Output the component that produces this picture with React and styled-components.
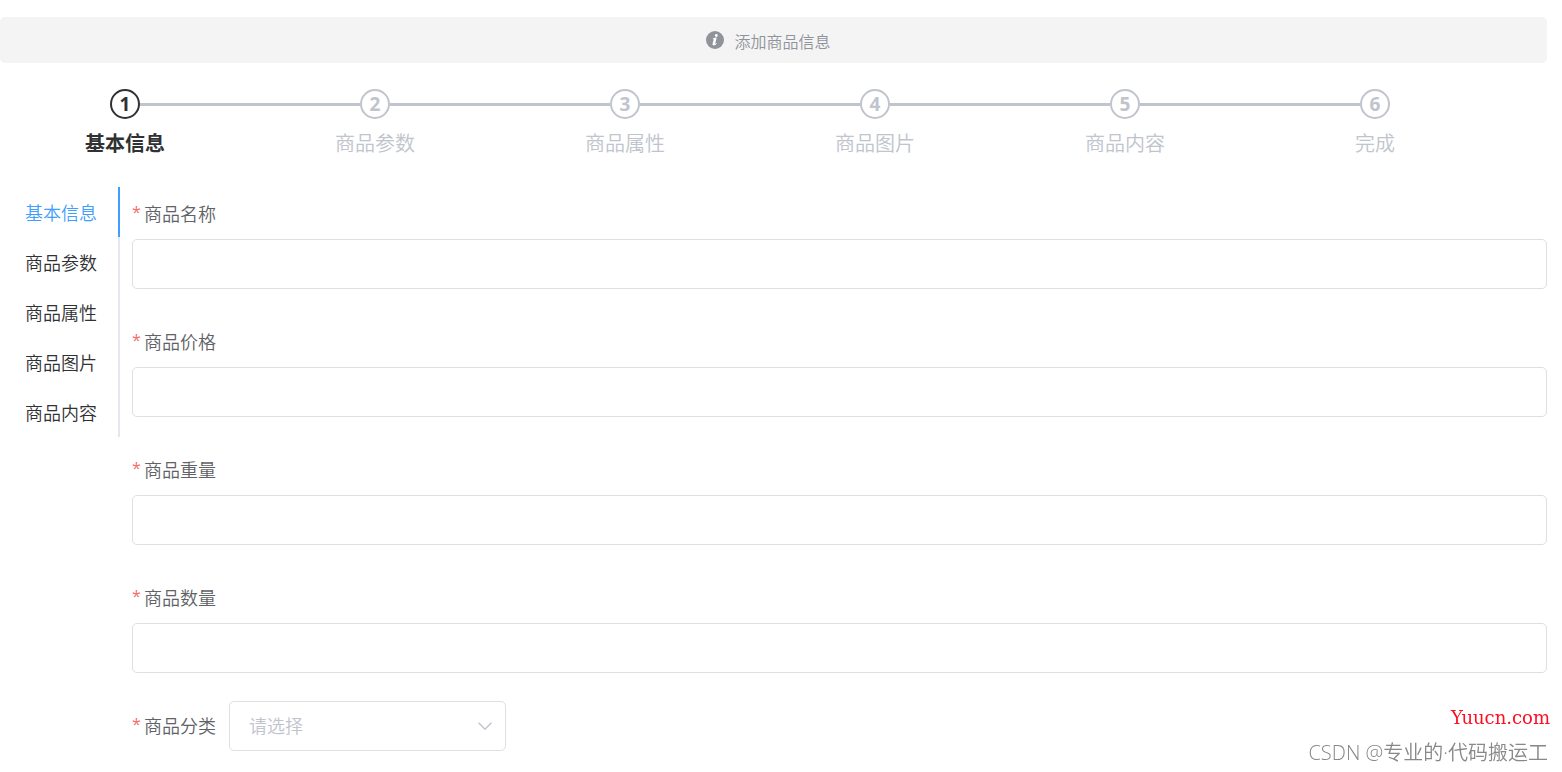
import * as React from 'react';
import { useState } from 'react';
import styled, { createGlobalStyle } from 'styled-components';

const GlobalStyle = createGlobalStyle`
  *, *::before, *::after {
    box-sizing: border-box;
  }

  body {
    margin: 0;
    background: #fff;
    color: #303133;
    font-family: 'Open Sans', 'Noto Sans CJK SC', sans-serif;
    font-size: 18px;
  }

  button, input, select {
    font: inherit;
  }
`;

const Page = styled.main`
  padding: 17px 15px 20px 0;
`;

const Alert = styled.div`
  display: flex;
  align-items: center;
  justify-content: center;
  gap: 10px;
  height: 46px;
  padding: 4px 10px 0 0;
  border-radius: 5px;
  background: #f4f4f5;
  color: #909399;
  font-size: 16px;
  font-weight: 350;
  line-height: 24px;
`;

const AlertIcon = styled.svg`
  width: 18px;
  height: 18px;
  margin-bottom: 5px;
`;

const Steps = styled.ol`
  display: flex;
  margin: 26px 47px 0 0;
  padding: 0;
  list-style: none;
`;

const Step = styled.li`
  flex: 1;
  color: ${({ $active }) => ($active ? '#303133' : '#c0c4cc')};
  font-weight: ${({ $active }) => ($active ? 700 : 350)};
  text-align: center;
`;

const StepHead = styled.div`
  display: flex;
  align-items: center;
`;

const StepLine = styled.span`
  flex: 1;
  height: 3px;
  background: ${({ $hidden }) => ($hidden ? 'transparent' : '#c0c4cc')};
`;

const StepNumber = styled.span`
  width: 30px;
  height: 30px;
  border: 2px solid currentColor;
  border-radius: 50%;
  font-size: 19px;
  font-weight: 700;
  line-height: 26px;
`;

const StepTitle = styled.div`
  margin-top: 9px;
  font-size: 20px;
  line-height: 32px;
`;

const Content = styled.div`
  display: flex;
  align-items: flex-start;
  gap: 12px;
  margin-top: 27px;
`;

const Tabs = styled.div`
  display: flex;
  flex: none;
  flex-direction: column;
`;

const Tab = styled.button`
  height: 50px;
  padding: 2px 21px 0 25px;
  border: 0;
  border-right: 2px solid ${({ $active }) => ($active ? '#409eff' : '#e4e7ed')};
  background: none;
  color: ${({ $active }) => ($active ? '#409eff' : '#303133')};
  font-weight: 350;
  line-height: 48px;
  cursor: pointer;
`;

const Form = styled.form`
  display: flex;
  flex: 1;
  flex-direction: column;
  gap: 28px;
  padding-top: 2px;
`;

const Field = styled.div`
  display: flex;
  flex-direction: ${({ $inline }) => ($inline ? 'row' : 'column')};
  gap: ${({ $inline }) => ($inline ? '13px' : '0')};
`;

const Label = styled.label`
  display: flex;
  height: 50px;
  color: #606266;
  font-weight: 350;
  line-height: 50px;

  &::before {
    content: '*';
    width: 12px;
    color: #f56c6c;
    font-size: 16px;
    font-weight: 400;
    line-height: 46px;
  }
`;

const Input = styled.input`
  width: 100%;
  height: 50px;
  padding: 0 19px;
  border: 1px solid #dcdfe6;
  border-radius: 5px;
  outline: none;
  background: #fff;
  color: #606266;

  &:focus {
    border-color: #409eff;
  }
`;

const SelectBox = styled.div`
  display: grid;
  width: 277px;
  align-items: center;

  > * {
    grid-area: 1 / 1;
  }
`;

const Select = styled.select`
  width: 100%;
  height: 50px;
  padding: 0 40px 0 19px;
  border: 1px solid #dcdfe6;
  border-radius: 5px;
  outline: none;
  appearance: none;
  background: #fff;
  color: ${({ value }) => (value ? '#606266' : '#c0c4cc')};
  font-weight: 350;
`;

const Arrow = styled.svg`
  justify-self: end;
  width: 14px;
  height: 8px;
  margin-right: 14px;
  pointer-events: none;
`;

const Watermark = styled.div`
  position: fixed;
  right: 12px;
  bottom: 3px;
  display: flex;
  flex-direction: column;
  align-items: flex-end;
  pointer-events: none;
`;

const SiteName = styled.span`
  color: #fe0e23;
  font-family: 'DejaVu Serif', serif;
  font-size: 18px;
  line-height: 38px;
`;

const Author = styled.span`
  margin-right: 2px;
  color: #888;
  font-size: 20px;
  font-weight: 350;
  line-height: 32px;
`;

const steps = ['基本信息', '商品参数', '商品属性', '商品图片', '商品内容', '完成'];

const fields = [
  { name: 'goods_name', label: '商品名称' },
  { name: 'goods_price', label: '商品价格' },
  { name: 'goods_weight', label: '商品重量' },
  { name: 'goods_number', label: '商品数量' },
];

const App = () => {
  const [active, setActive] = useState(0);
  const [category, setCategory] = useState('');

  return (
    <>
      <GlobalStyle />
      <Page>
        <Alert role="status">
          <AlertIcon viewBox="0 0 18 18" aria-hidden="true">
            <circle cx="9" cy="9" r="9" fill="#909399" />
            <circle cx="10.3" cy="4.5" r="1.4" fill="#fff" />
            <path
              d="M6.9 7.5c1.1-.5 2.3-.8 3.8-.9L9.3 12.2c-.2.8.3.7 1.2-.1l.3.4c-1 1.2-1.9 1.9-3 1.9-1.1 0-1.5-.8-1.2-1.9l1.1-3.9c.1-.5-.2-.5-.9-.4z"
              fill="#fff"
            />
          </AlertIcon>
          <span>添加商品信息</span>
        </Alert>

        <Steps>
          {steps.map((title, index) => (
            <Step key={title} $active={index === active}>
              <StepHead>
                <StepLine $hidden={index === 0} />
                <StepNumber>{index + 1}</StepNumber>
                <StepLine $hidden={index === steps.length - 1} />
              </StepHead>
              <StepTitle>{title}</StepTitle>
            </Step>
          ))}
        </Steps>

        <Content>
          <Tabs role="tablist" aria-orientation="vertical">
            {steps.slice(0, 5).map((title, index) => (
              <Tab
                key={title}
                type="button"
                role="tab"
                aria-selected={index === active}
                $active={index === active}
                onClick={() => setActive(index)}
              >
                {title}
              </Tab>
            ))}
          </Tabs>

          <Form>
            {fields.map(({ name, label }) => (
              <Field key={name}>
                <Label htmlFor={name}>{label}</Label>
                <Input id={name} name={name} type="text" required />
              </Field>
            ))}
            <Field $inline>
              <Label htmlFor="goods_cat">商品分类</Label>
              <SelectBox>
                <Select
                  id="goods_cat"
                  value={category}
                  onChange={(e) => setCategory(e.target.value)}
                >
                  <option value="">请选择</option>
                </Select>
                <Arrow viewBox="0 0 14 8" fill="none" stroke="#c0c4cc" aria-hidden="true">
                  <path d="M.6.8 7 7.2 13.4.8" strokeWidth="1.4" />
                </Arrow>
              </SelectBox>
            </Field>
          </Form>
        </Content>
      </Page>

      <Watermark>
        <SiteName>Yuucn.com</SiteName>
        <Author>CSDN @专业的·代码搬运工</Author>
      </Watermark>
    </>
  );
};

export default App;
